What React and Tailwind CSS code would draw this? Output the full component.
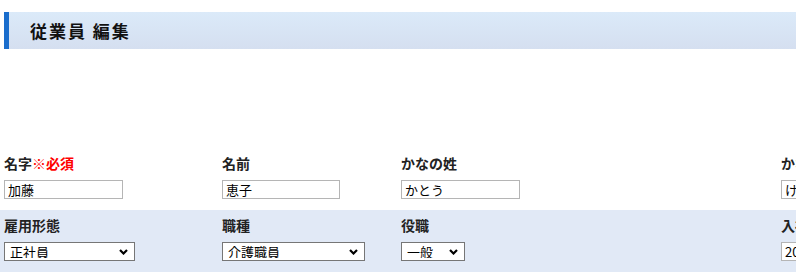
import React from "react";

const font = { fontFamily: '"Noto Sans CJK JP", "Noto Sans", sans-serif' };

function Chevron() {
    return (
        <svg width="9" height="6" viewBox="0 0 9 6" className="absolute right-[7px] top-[7px] pointer-events-none">
            <path d="M1 1 L4.5 4.5 L8 1" fill="none" stroke="#000" strokeWidth="2.2" />
        </svg>
    );
}

function TextField({ value, width }) {
    return (
        <input
            defaultValue={value}
            className={`block h-[19px] border border-[#b5b5b5] bg-white px-[3px] text-[13px] leading-none text-black outline-none ${width}`}
            style={font}
        />
    );
}

function SelectField({ value, width }) {
    return (
        <div className={`relative h-[19px] ${width}`}>
            <select
                defaultValue={value}
                className="block appearance-none w-full h-full border border-[#767676] bg-white pl-[5px] pr-[20px] text-[13px] leading-none text-black outline-none"
                style={font}
            >
                <option>{value}</option>
            </select>
            <Chevron />
        </div>
    );
}

function Cell({ label, required, children, width }) {
    return (
        <div className={`shrink-0 px-[4px] ${width}`}>
            <div className="h-[24px] flex items-center text-[14px] font-bold text-[#222] whitespace-nowrap">
                {label}
                {required && <span className="text-[#ff0000]">※必須</span>}
            </div>
            <div className="mt-[5px] flex">{children}</div>
        </div>
    );
}

export default function App() {
    return (
        <div className="w-[796px] h-[272px] overflow-hidden bg-white" style={font}>
            <div className="pt-[12px] pl-[4px]">
                <div className="h-[37px] border-l-[5px] border-[#1a6dcc] bg-gradient-to-b from-[#dbeaf9] to-[#d5dff0] flex items-center pl-[21px]">
                    <h1 className="text-[17px] font-bold text-[#111] tracking-[2px]">従業員 編集</h1>
                </div>
            </div>

            <div className="mt-[101px]">
                {/* row 1 */}
                <div className="h-[60px] flex pt-[1px] w-[1000px]">
                    <Cell label="名字" required width="w-[218px]">
                        <TextField value="加藤" width="w-[119px]" />
                    </Cell>
                    <Cell label="名前" width="w-[179px]">
                        <TextField value="恵子" width="w-[118px]" />
                    </Cell>
                    <Cell label="かなの姓" width="w-[380px]">
                        <TextField value="かとう" width="w-[119px]" />
                    </Cell>
                    <Cell label="かなの名" width="w-[200px]">
                        <TextField value="けいこ" width="w-[119px]" />
                    </Cell>
                </div>
                {/* row 2 */}
                <div className="h-[62px] flex pt-[3px] bg-[#e1e9f6] w-[1000px]">
                    <Cell label="雇用形態" width="w-[218px]">
                        <SelectField value="正社員" width="w-[131px]" />
                    </Cell>
                    <Cell label="職種" width="w-[179px]">
                        <SelectField value="介護職員" width="w-[143px]" />
                    </Cell>
                    <Cell label="役職" width="w-[380px]">
                        <SelectField value="一般" width="w-[64px]" />
                    </Cell>
                    <Cell label="入社日" width="w-[200px]">
                        <TextField value="2020/04/01" width="w-[119px]" />
                    </Cell>
                </div>
            </div>
        </div>
    );
}
